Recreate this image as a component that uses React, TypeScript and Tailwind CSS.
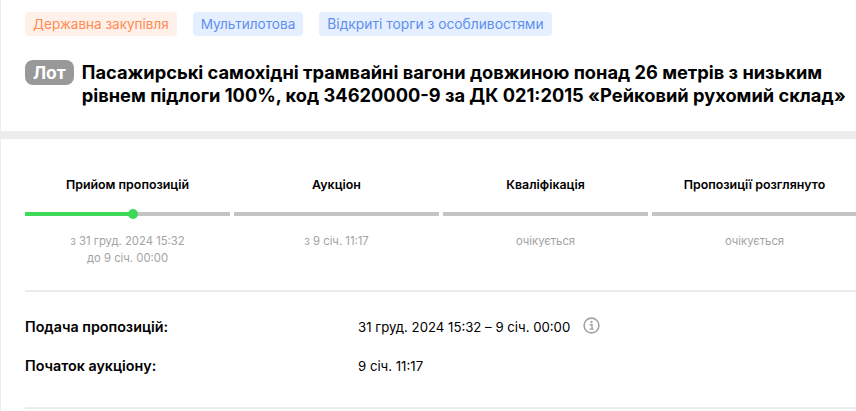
import React from 'react';

const steps = [
  { title: 'Прийом пропозицій', lines: ['з 31 груд. 2024 15:32', 'до 9 січ. 00:00'], progress: true },
  { title: 'Аукціон', lines: ['з 9 січ. 11:17'] },
  { title: 'Кваліфікація', lines: ['очікується'] },
  { title: 'Пропозиції розглянуто', lines: ['очікується'] },
];

const InfoIcon = () => (
  <svg width="17" height="17" viewBox="0 0 17 17" fill="none" className="ml-[13px] text-[#a3a3a3]">
    <circle cx="8.5" cy="8.5" r="7.4" stroke="currentColor" strokeWidth="1.6" />
    <circle cx="8.5" cy="5" r="1.2" fill="currentColor" />
    <path d="M6.6 7.7h2.4v4.2M6.4 12.1h4.2" stroke="currentColor" strokeWidth="1.4" />
  </svg>
);

export default function App() {
  return (
    <div className="h-[411px] w-[856px] overflow-hidden border-l border-[#ececec] bg-white font-['Inter',sans-serif] text-black">
      <section className="h-[131px] pl-6 pt-3">
        <div className="flex gap-4 text-[13.5px] leading-6">
          <span className="rounded bg-[#fff1e9] px-2 text-[#ff8a52]">Державна закупівля</span>
          <span className="rounded bg-[#e5efff] px-2 text-[13.6px] text-[#5f8fee]">Мультилотова</span>
          <span className="rounded bg-[#e5efff] px-2 text-[13.8px] text-[#5f8fee]">Відкриті торги з особливостями</span>
        </div>
        <div className="mt-6 flex items-start gap-2">
          <span className="h-[25px] rounded-lg bg-[#999999] px-2 text-[17.5px] font-bold leading-[25px] text-white">Лот</span>
          <h1 className="mt-px text-[18.25px] font-bold leading-[23px]">
            Пасажирські самохідні трамвайні вагони довжиною понад 26 метрів з низьким
            <br />
            рівнем підлоги 100%, код 34620000-9 за ДК 021:2015 «Рейковий рухомий склад»
          </h1>
        </div>
      </section>

      <div className="h-2 bg-[#ececec]" />

      <section className="pl-6 pt-[38px]">
        <div className="flex w-[840px] gap-1">
          {steps.map((step) => (
            <div key={step.title} className="w-[205px] shrink-0 text-center">
              <div className="text-[12.4px] font-semibold leading-4">{step.title}</div>
              <div className="relative mt-[19px] h-1 bg-[#c4c4c4]">
                {step.progress && (
                  <div className="absolute inset-y-0 left-0 w-[108px] bg-[#3fd95a]">
                    <div className="absolute -right-[5px] -top-[3px] size-[10px] rounded-full bg-[#3fd95a]" />
                  </div>
                )}
              </div>
              <div className="mt-[17px] text-[11.3px] leading-[17px] text-[#a3a3a3]">
                {step.lines.map((line) => (
                  <div key={line}>{line}</div>
                ))}
              </div>
            </div>
          ))}
        </div>

        <div className="mt-[23px] border-t-2 border-[#ececec] pb-[31px] pt-[25px] text-[13.2px] leading-5">
          <div className="flex">
            <div className="w-[333px] text-[14.3px] font-semibold">Подача пропозицій:</div>
            <div>31 груд. 2024 15:32 – 9 січ. 00:00</div>
            <InfoIcon />
          </div>
          <div className="mt-[19px] flex">
            <div className="w-[333px] text-[14.3px] font-semibold">Початок аукціону:</div>
            <div>9 січ. 11:17</div>
          </div>
        </div>
        <div className="border-t-2 border-[#ececec]" />
      </section>
    </div>
  );
}
